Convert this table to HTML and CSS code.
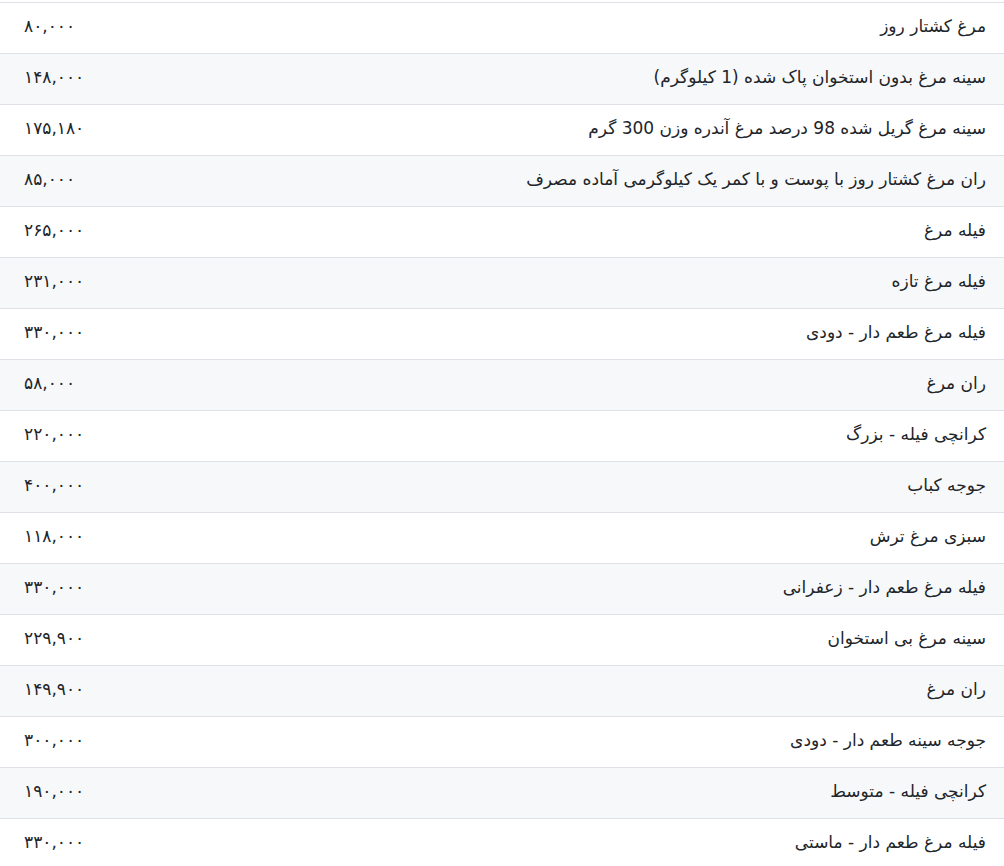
FILE: index.html
```html
<!DOCTYPE html>
<html lang="fa" dir="rtl">
<head>
  <meta charset="UTF-8">
  <title>قیمت مرغ</title>
  <link rel="stylesheet" href="styles.css">
</head>
<body>
  <div class="price-list">
    <table class="prices">
      <tbody>
        <tr><td class="name">مرغ کشتار روز</td><td class="price">۸۰,۰۰۰</td></tr>
        <tr><td class="name">سینه مرغ بدون استخوان پاک شده (1 کیلوگرم)</td><td class="price">۱۴۸,۰۰۰</td></tr>
        <tr><td class="name">سینه مرغ گریل شده 98 درصد مرغ آندره وزن 300 گرم</td><td class="price">۱۷۵,۱۸۰</td></tr>
        <tr><td class="name">ران مرغ کشتار روز با پوست و با کمر یک کیلوگرمی آماده مصرف</td><td class="price">۸۵,۰۰۰</td></tr>
        <tr><td class="name">فیله مرغ</td><td class="price">۲۶۵,۰۰۰</td></tr>
        <tr><td class="name">فیله مرغ تازه</td><td class="price">۲۳۱,۰۰۰</td></tr>
        <tr><td class="name">فیله مرغ طعم دار - دودی</td><td class="price">۳۳۰,۰۰۰</td></tr>
        <tr><td class="name">ران مرغ</td><td class="price">۵۸,۰۰۰</td></tr>
        <tr><td class="name">کرانچی فیله - بزرگ</td><td class="price">۲۲۰,۰۰۰</td></tr>
        <tr><td class="name">جوجه کباب</td><td class="price">۴۰۰,۰۰۰</td></tr>
        <tr><td class="name">سبزی مرغ ترش</td><td class="price">۱۱۸,۰۰۰</td></tr>
        <tr><td class="name">فیله مرغ طعم دار - زعفرانی</td><td class="price">۳۳۰,۰۰۰</td></tr>
        <tr><td class="name">سینه مرغ بی استخوان</td><td class="price">۲۲۹,۹۰۰</td></tr>
        <tr><td class="name">ران مرغ</td><td class="price">۱۴۹,۹۰۰</td></tr>
        <tr><td class="name">جوجه سینه طعم دار - دودی</td><td class="price">۳۰۰,۰۰۰</td></tr>
        <tr><td class="name">کرانچی فیله - متوسط</td><td class="price">۱۹۰,۰۰۰</td></tr>
        <tr><td class="name">فیله مرغ طعم دار - ماستی</td><td class="price">۳۳۰,۰۰۰</td></tr>
      </tbody>
    </table>
  </div>
</body>
</html>
```

FILE: styles.css
```css
body {
  margin: 0;
  font-family: "DejaVu Sans", sans-serif;
  color: #212529;
  background: #fff;
}
.price-list {
  padding-top: 2px;
}
.prices {
  width: 100%;
  border-collapse: collapse;
  font-size: 17px;
}
.prices td {
  height: 46px;
  padding: 0 18px 4px 24px;
  border-top: 1px solid #dee2e6;
  vertical-align: middle;
}
.prices tr:nth-child(even) td {
  background: #f7f8fa;
}
.name {
  text-align: right;
}
.price {
  text-align: left;
  width: 120px;
}
```
